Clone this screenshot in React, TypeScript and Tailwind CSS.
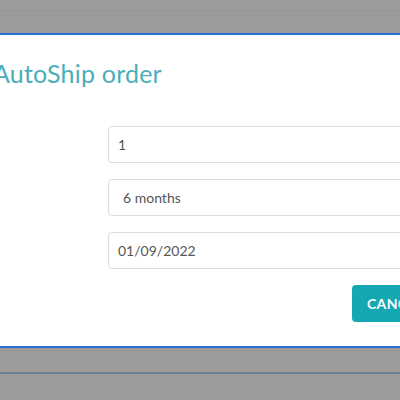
export default function App() {
  return (
    <div className="relative h-[400px] w-[400px] overflow-hidden bg-[#9b9b9b] font-['Lato',sans-serif]">
      <div className="h-[10px]" />
      <div className="h-px bg-[#949494]" />
      <div className="h-[22px]" />
      {/* modal */}
      <div className="-ml-[26px] w-[460px] border-y-2 border-[#2a6fd6] bg-white">
        <div className="h-[311px] border-y border-white bg-white">
          <h2 className="pl-[22px] pt-[22px] text-[25px] leading-[30px] text-[#4aaebb]">
            <span className="-ml-[3px] tracking-[0.2px]">AutoShip order</span>
          </h2>
          <div className="ml-[134px] mt-[38px] flex flex-col gap-[16px]">
            <div className="flex h-[37px] items-center rounded border border-[#dcdcdc] px-[9px] text-[14px] text-[#555]">1</div>
            <div className="flex h-[37px] items-center rounded border border-[#dcdcdc] px-[14px] text-[14px] text-[#555]">6 months</div>
            <div className="flex h-[37px] items-center rounded border border-[#dcdcdc] px-[9px] text-[14px] text-[#555]">01/09/2022</div>
          </div>
          <div className="ml-[378px] mt-[16px] flex h-[37px] w-[90px] items-center rounded bg-[#16a8b2] pl-[15px] text-[14px] font-bold tracking-wide text-white">
            CANCEL
          </div>
        </div>
      </div>
      <div className="h-[24px]" />
      <div className="h-[2px] bg-[#6b7f8e]" />
    </div>
  );
}
